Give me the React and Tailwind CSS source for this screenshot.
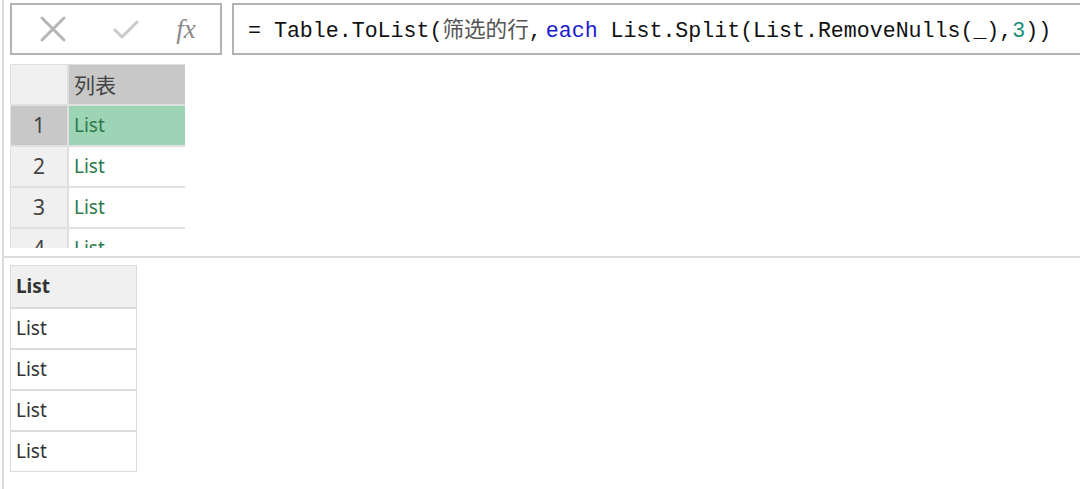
import React from "react";

const sans = { fontFamily: '"Noto Sans", "Open Sans", "Noto Sans CJK SC", sans-serif' };
const mono = { fontFamily: '"Liberation Mono", "DejaVu Sans Mono", "Noto Sans CJK SC", monospace' };

function XIcon() {
  return (
    <svg width="28" height="28" viewBox="0 0 28 28">
      <path d="M3 3 L25 25 M25 3 L3 25" stroke="#b5b5b5" strokeWidth="3" strokeLinecap="round" fill="none" />
    </svg>
  );
}

function CheckIcon() {
  return (
    <svg width="26" height="22" viewBox="0 0 26 22">
      <path d="M2 11 L9 18 L24 3" stroke="#c9c9c9" strokeWidth="3" strokeLinecap="round" strokeLinejoin="round" fill="none" />
    </svg>
  );
}

export default function App() {
  const rows = [1, 2, 3, 4];
  return (
    <div className="w-[1080px] h-[489px] bg-white flex overflow-hidden" style={sans}>
      <div className="w-[2px] shrink-0" />
      <div className="w-[2px] shrink-0 bg-[#dcdcdc]" />
      <div className="flex-1 flex flex-col min-w-0">
        {/* formula bar */}
        <div className="flex pt-[3px] pl-[6px] gap-[10px] h-[55px]">
          <div className="w-[212px] h-[52px] shrink-0 border-2 border-[#b3b3b3] flex items-center">
            <div className="w-[80px] flex justify-center pl-[1px]"><XIcon /></div>
            <div className="w-[68px] flex justify-center pt-[2px]"><CheckIcon /></div>
            <div className="flex-1 flex justify-center pr-[8px] text-[27px] text-[#8a8a8a] italic" style={{ fontFamily: '"Liberation Serif", serif' }}>fx</div>
          </div>
          <div className="flex-1 h-[52px] border-2 border-r-0 border-[#b3b3b3] flex items-center pl-[14px] pt-[4px] whitespace-nowrap text-[21.6px] text-[#111]" style={mono}>
            <span>= Table.ToList(</span>
            <span className="text-[#555]">筛选的行</span>
            <span className="pr-[4px]">,</span>
            <span className="text-[#1a1ad0]">each</span>
            <span>&nbsp;List.Split(List.RemoveNulls(_),</span>
            <span className="text-[#16907a]">3</span>
            <span>))</span>
          </div>
        </div>

        {/* top table */}
        <div className="pl-[6px] pt-[9px] h-[193px]">
          <div className="h-[184px] overflow-hidden w-[175px]">
            <div className="grid grid-cols-[56px_116px] auto-rows-[39px] gap-[2px] bg-[#e0e0e0] p-[1px] w-[175px]">
              <div className="bg-[#f0f0f0]" />
              <div className="bg-[#c8c8c8] flex items-center pl-[5px] text-[21px] text-[#444]" style={{ fontFamily: '"Noto Sans CJK SC", sans-serif' }}>列表</div>
              {rows.map((n) => (
                <React.Fragment key={n}>
                  <div className={`${n === 1 ? "bg-[#c8c8c8]" : "bg-[#f0f0f0]"} flex items-center justify-center text-[21px] text-[#444]`}>{n}</div>
                  <div className={`${n === 1 ? "bg-[#9dd4b5]" : "bg-white"} flex items-center pl-[5px] text-[19px] text-[#2d7a4c]`}>List</div>
                </React.Fragment>
              ))}
            </div>
          </div>
        </div>

        {/* divider */}
        <div className="h-[2px] bg-[#dcdcdc] mt-[8px]" />

        {/* bottom table */}
        <div className="pl-[6px] pt-[7px]">
          <div className="w-[127px] border border-[#dcdcdc] bg-[#dcdcdc] flex flex-col gap-[2px]">
            <div className="h-[41px] bg-[#f0f0f0] flex items-center pl-[5px] text-[19px] font-bold text-[#333]">List</div>
            {[0, 1, 2, 3].map((i) => (
              <div key={i} className="h-[39px] bg-white flex items-center pl-[5px] text-[19px] text-[#333]">List</div>
            ))}
          </div>
        </div>
      </div>
    </div>
  );
}
